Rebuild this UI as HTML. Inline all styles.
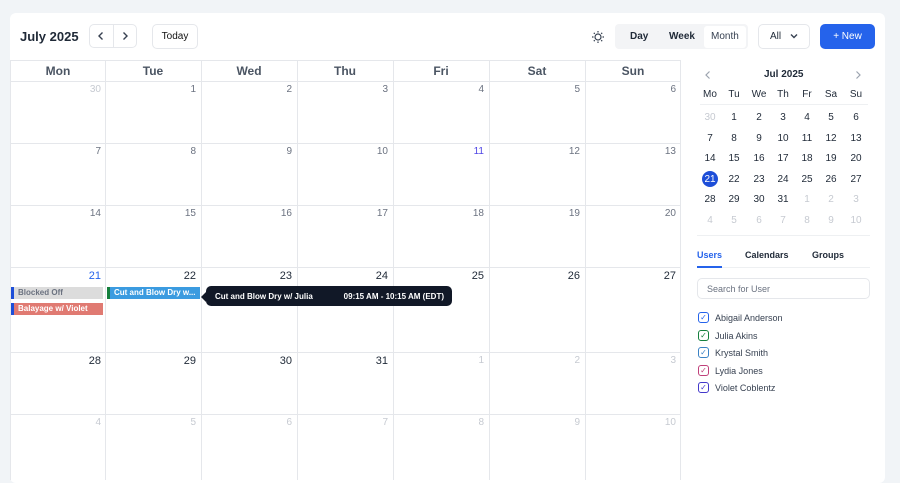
<!DOCTYPE html>
<html><head><style>
*{box-sizing:border-box;margin:0;padding:0}
body{width:900px;height:479px;background:#f1f4f7;font-family:"Liberation Sans",sans-serif;position:relative;overflow:hidden;color:#1f2937}
.card{position:absolute;left:10px;top:13px;width:875px;height:470px;background:#fff;border-radius:6px}
.abs{position:absolute}
.btn{position:absolute;border:1px solid #e5e7eb;border-radius:5px;background:#fff;font-size:10px;font-weight:bold;display:flex;align-items:center;justify-content:center}
.grid{position:absolute;left:10px;top:60px;width:671px;height:420px;border-top:1px solid #e5e7eb}
.vl{position:absolute;top:0;bottom:0;width:1px;background:#e5e7eb}
.hl{position:absolute;left:0;right:0;height:1px;background:#e5e7eb}
.dh{position:absolute;top:3px;width:96px;text-align:center;font-size:12px;color:#4b5563;font-weight:bold}
.dn{position:absolute;font-size:10px;color:#6b7280;text-align:right;width:90px}
.g{color:#c6cad1}
.mc{position:absolute;font-size:10px;width:24px;text-align:center;color:#1f2937}
.u{position:absolute;left:698px;font-size:9px;color:#374151;display:flex;align-items:center}
.cb{width:11px;height:11px;border:1.5px solid;border-radius:3px;margin-right:6px;display:flex;align-items:center;justify-content:center}
</style></head><body>
<div class="card"></div>
<div class="abs" style="left:20px;top:29px;font-size:13px;font-weight:bold">July 2025</div>
<div class="btn" style="left:89px;top:24px;width:48px;height:24px"></div>
<div class="abs" style="left:113px;top:25px;width:1px;height:22px;background:#e5e7eb"></div>
<svg class="abs" style="left:96px;top:31px" width="10" height="10" viewBox="0 0 10 10" fill="none" stroke="#374151" stroke-width="1.4"><path d="M6.5 1.5L3 5l3.5 3.5"/></svg>
<svg class="abs" style="left:120px;top:31px" width="10" height="10" viewBox="0 0 10 10" fill="none" stroke="#374151" stroke-width="1.4"><path d="M3.5 1.5L7 5 3.5 8.5"/></svg>
<div class="btn" style="left:152px;top:24px;width:46px;height:25px;font-weight:normal;color:#111">Today</div>
<svg class="abs" style="left:590px;top:29px" width="16" height="16" viewBox="0 0 16 16" fill="none" stroke="#374151" stroke-width="1.2"><circle cx="8" cy="8" r="3"/><path d="M8 2v1.5M8 12.5V14M2 8h1.5M12.5 8H14M3.8 3.8l1 1M11.2 11.2l1 1M3.8 12.2l1-1M11.2 4.8l1-1"/></svg>
<div class="abs" style="left:615px;top:24px;width:133px;height:25px;background:#f3f4f6;border-radius:4px"></div>
<div class="abs" style="left:704px;top:26px;width:42px;height:22px;background:#fff;border-radius:3px"></div>
<div class="abs" style="left:630px;top:31px;font-size:10px;font-weight:bold">Day</div>
<div class="abs" style="left:669px;top:31px;font-size:10px;font-weight:bold">Week</div>
<div class="abs" style="left:711px;top:31px;font-size:10px;color:#374151">Month</div>
<div class="btn" style="left:758px;top:24px;width:52px;height:25px;font-weight:normal;justify-content:flex-start;padding-left:11px">All</div>
<svg class="abs" style="left:789px;top:32px" width="10" height="8" viewBox="0 0 10 8" fill="none" stroke="#374151" stroke-width="1.4"><path d="M2 2.5L5 5.5 8 2.5"/></svg>
<div class="btn" style="left:820px;top:24px;width:55px;height:25px;background:#2563eb;border-color:#2563eb;color:#fff;font-weight:normal;font-size:10px">+ New</div>

<div class="grid">
<div class="hl" style="top:20px"></div>
<div class="hl" style="top:82px"></div>
<div class="hl" style="top:144px"></div>
<div class="hl" style="top:206px"></div>
<div class="hl" style="top:291px"></div>
<div class="hl" style="top:353px"></div>
<div class="vl" style="left:0"></div><div class="vl" style="left:95px"></div><div class="vl" style="left:191px"></div><div class="vl" style="left:287px"></div><div class="vl" style="left:383px"></div><div class="vl" style="left:479px"></div><div class="vl" style="left:575px"></div><div class="vl" style="left:670px"></div>
<div class="dh" style="left:0">Mon</div><div class="dh" style="left:95px">Tue</div><div class="dh" style="left:191px">Wed</div><div class="dh" style="left:287px">Thu</div><div class="dh" style="left:383px">Fri</div><div class="dh" style="left:479px">Sat</div><div class="dh" style="left:575px">Sun</div>
</div>
<div id="nums"></div>
<script>
var L=[10,105,201,297,393,489,585],T=[84,146,208,270,355,417];
var d=[[30,1,2,3,4,5,6],[7,8,9,10,11,12,13],[14,15,16,17,18,19,20],[21,22,23,24,25,26,27],[28,29,30,31,1,2,3],[4,5,6,7,8,9,10]];
var h='';for(var r=0;r<6;r++)for(var c=0;c<7;c++){var v=d[r][c],g=(r==0&&c==0)||(r>=4&&v<20&&!(r==4&&c<4)),s='';
if(r==3){s='font-size:11px;color:#1f2937;';if(c==0)s+='color:#2563eb;'}
if(r==4&&c<4)s='font-size:11px;color:#1f2937;';
if(r==1&&c==4)s='color:#4f46e5;';
h+='<div class="dn'+(g?' g':'')+'" style="left:'+(L[c]+1)+'px;top:'+T[r]+'px;'+s+'">'+v+'</div>'}
document.getElementById('nums').innerHTML=h;
</script>
<div class="abs" style="left:11px;top:287px;width:92px;height:12px;background:#dcdcdc;border-left:3px solid #1d4ed8;font-size:8px;font-weight:bold;color:#6b7280;padding:1px 4px">Blocked Off</div>
<div class="abs" style="left:11px;top:303px;width:92px;height:12px;background:#e07a72;border-left:3px solid #1d4ed8;font-size:8px;font-weight:bold;color:#fff;padding:1px 4px">Balayage w/ Violet</div>
<div class="abs" style="left:107px;top:287px;width:93px;height:12px;background:#3b9be0;border-left:3px solid #15803d;font-size:8px;font-weight:bold;color:#fff;padding:1px 4px;white-space:nowrap;overflow:hidden">Cut and Blow Dry w...</div>
<div class="abs" style="left:206px;top:286px;width:246px;height:20px;background:#111827;border-radius:5px;font-size:8px;font-weight:bold;color:#fff"><span style="position:absolute;left:9px;top:6px">Cut and Blow Dry w/ Julia</span><span style="position:absolute;right:8px;top:6px">09:15 AM - 10:15 AM (EDT)</span></div>
<div class="abs" style="left:201px;top:292px;border:5px solid transparent;border-right-color:#111827;border-left:0"></div>

<svg class="abs" style="left:703px;top:70px" width="10" height="10" viewBox="0 0 10 10" fill="none" stroke="#9ca3af" stroke-width="1.2"><path d="M6.5 1.5L3 5l3.5 3.5"/></svg>
<svg class="abs" style="left:853px;top:70px" width="10" height="10" viewBox="0 0 10 10" fill="none" stroke="#9ca3af" stroke-width="1.2"><path d="M3.5 1.5L7 5 3.5 8.5"/></svg>
<div class="abs" style="left:764px;top:69px;font-size:10px;font-weight:bold">Jul 2025</div>
<div class="abs" style="left:700px;top:104px;width:168px;height:1px;background:#eef0f2"></div>
<div class="abs" style="left:697px;top:235px;width:173px;height:1px;background:#eef0f2"></div>
<div id="mini"></div>
<script>
var C=[710,734,759,783,807,831,856],R=[117,138,158,179,199,220],n=['Mo','Tu','We','Th','Fr','Sa','Su'];
var m=[[30,1,2,3,4,5,6],[7,8,9,10,11,12,13],[14,15,16,17,18,19,20],[21,22,23,24,25,26,27],[28,29,30,31,1,2,3],[4,5,6,7,8,9,10]];
var h='';for(var c=0;c<7;c++)h+='<div class="mc" style="left:'+(C[c]-12)+'px;top:89px">'+n[c]+'</div>';
for(var r=0;r<6;r++)for(var c=0;c<7;c++){var v=m[r][c],g=(r==0&&c==0)||(r==4&&c>3)||r==5,s='';
if(r==3&&c==0)h+='<div class="abs" style="left:'+(C[c]-8)+'px;top:'+(R[r]-8)+'px;width:16px;height:16px;border-radius:50%;background:#1d4ed8"></div>',s='color:#fff;';
if(g)s='color:#c6cad1;';
h+='<div class="mc" style="left:'+(C[c]-12)+'px;top:'+(R[r]-5)+'px;'+s+'">'+v+'</div>'}
document.getElementById('mini').innerHTML=h;
</script>
<div class="abs" style="left:697px;top:250px;font-size:9px;font-weight:bold;color:#2563eb">Users</div>
<div class="abs" style="left:745px;top:250px;font-size:9px;font-weight:bold">Calendars</div>
<div class="abs" style="left:812px;top:250px;font-size:9px;font-weight:bold">Groups</div>
<div class="abs" style="left:697px;top:267px;width:173px;height:1px;background:#eef0f2"></div>
<div class="abs" style="left:697px;top:266px;width:25px;height:2px;background:#2563eb"></div>
<div class="abs" style="left:697px;top:278px;width:173px;height:21px;border:1px solid #e5e7eb;border-radius:5px;font-size:9px;color:#6b7280;padding:5px 9px">Search for User</div>
<div class="u" style="top:312px"><div class="cb" style="border-color:#2563eb;color:#2563eb;font-size:8px">✓</div>Abigail Anderson</div>
<div class="u" style="top:330px"><div class="cb" style="border-color:#15803d;color:#15803d;font-size:8px">✓</div>Julia Akins</div>
<div class="u" style="top:347px"><div class="cb" style="border-color:#3b82c4;color:#3b82c4;font-size:8px">✓</div>Krystal Smith</div>
<div class="u" style="top:365px"><div class="cb" style="border-color:#c0407a;color:#c0407a;font-size:8px">✓</div>Lydia Jones</div>
<div class="u" style="top:382px"><div class="cb" style="border-color:#4338ca;color:#4338ca;font-size:8px">✓</div>Violet Coblentz</div>
</body></html>
